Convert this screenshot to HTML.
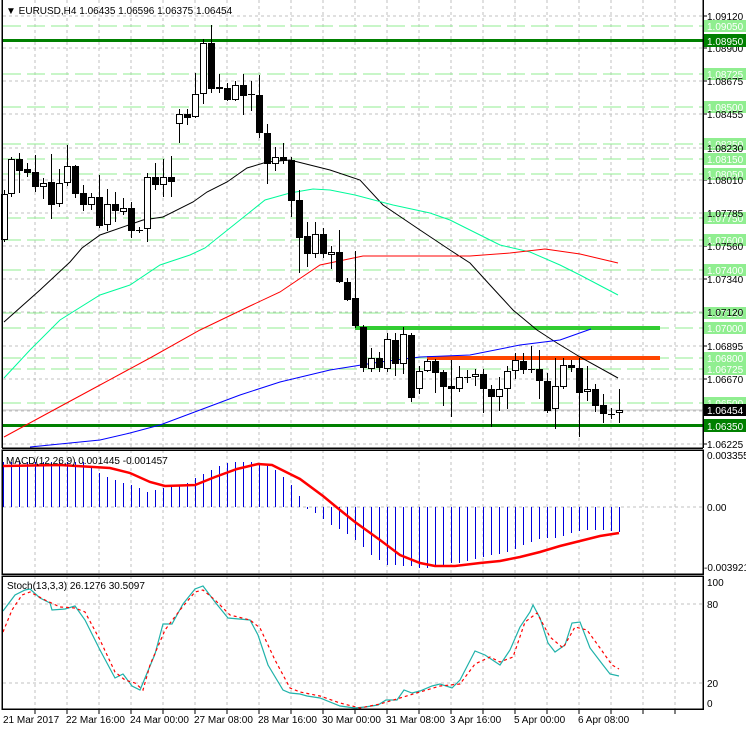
<!DOCTYPE html>
<html><head><meta charset="utf-8"><style>
html,body{margin:0;padding:0;background:#fff;width:746px;height:731px;overflow:hidden}
svg{display:block}
text{font-family:"Liberation Sans",sans-serif;font-size:10px;fill:#000}
.lbl{fill:#fff}
</style></head><body>
<svg id="s" width="746" height="731" xmlns="http://www.w3.org/2000/svg" shape-rendering="crispEdges">
<rect width="746" height="731" fill="#fff"/>
<g id="grid" stroke="#c0c0c0" stroke-dasharray="3 3" stroke-width="1"></g>
<g id="lev"></g>
<g id="ma" shape-rendering="auto" fill="none"></g>
<g id="cand"></g>
<g id="macd"></g>
<g id="stoch" shape-rendering="auto" fill="none"></g>
<g stroke="#000" stroke-width="1.5" fill="none">
<line x1="2" y1="0" x2="2" y2="448"/>
<line x1="2" y1="448" x2="703" y2="448"/>
<rect x="2" y="450" width="701" height="124"/>
<rect x="2" y="576" width="701" height="133"/>
<line x1="703" y1="0" x2="703" y2="448"/>
</g>
<g id="ticks" stroke="#000" stroke-width="1"></g>
<g id="rl"></g>
<text x="6" y="14">▼ EURUSD,H4  1.06435 1.06596 1.06375 1.06454</text>
<text x="6" y="464">MACD(12,26,9) 0.001445 -0.001457</text>
<text x="7" y="589">Stoch(13,3,3) 26.1276 30.5097</text>
<text x="707" y="459">0.003355</text>
<text x="707" y="511">0.00</text>
<text x="704" y="571">-0.003921</text>
<text x="707" y="586">100</text>
<text x="707" y="608">80</text>
<text x="707" y="687">20</text>
<text x="707" y="707">0</text>
<text x="3" y="723">21 Mar 2017</text>
<text x="66" y="723">22 Mar 16:00</text>
<text x="130" y="723">24 Mar 00:00</text>
<text x="194" y="723">27 Mar 08:00</text>
<text x="258" y="723">28 Mar 16:00</text>
<text x="322" y="723">30 Mar 00:00</text>
<text x="386" y="723">31 Mar 08:00</text>
<text x="450" y="723">3 Apr 16:00</text>
<text x="514" y="723">5 Apr 00:00</text>
<text x="578" y="723">6 Apr 08:00</text>
<g id="axt">
<text x="707" y="20">1.09120</text>
<text x="707" y="52">1.08900</text>
<text x="707" y="85">1.08675</text>
<text x="707" y="118">1.08455</text>
<text x="707" y="152">1.08230</text>
<text x="707" y="184">1.08010</text>
<text x="707" y="217">1.07785</text>
<text x="707" y="250">1.07560</text>
<text x="707" y="283">1.07340</text>
<text x="707" y="316">1.07120</text>
<text x="707" y="350">1.06895</text>
<text x="707" y="383">1.06670</text>
<text x="707" y="448">1.06225</text>
</g>
<g id="rl2"></g>
</svg>
<script>
var NS="http://www.w3.org/2000/svg";
function el(p,t,a,txt){var e=document.createElementNS(NS,t);for(var k in a)e.setAttribute(k,a[k]);if(txt!=null)e.textContent=txt;document.getElementById(p).appendChild(e);return e;}
[16,48,81,114,148,180,213,246,279,312,346,379,411,444].forEach(function(y){el("grid","line",{x1:3,y1:y,x2:703,y2:y});});
[507].forEach(function(y){el("grid","line",{x1:3,y1:y,x2:703,y2:y});});
[604,683].forEach(function(y){el("grid","line",{x1:3,y1:y,x2:703,y2:y});});
for(var x=35;x<703;x+=32){el("grid","line",{x1:x,y1:0,x2:x,y2:448});el("grid","line",{x1:x,y1:450,x2:x,y2:574});el("grid","line",{x1:x,y1:576,x2:x,y2:709});
el("ticks","line",{x1:x,y1:709,x2:x,y2:714});}
[16,48,81,114,148,180,213,246,279,312,346,379,411,444].forEach(function(y){el("ticks","line",{x1:703,y1:y,x2:707,y2:y});});
var lg=[[26,"1.09050"],[74,"1.08725"],[107,"1.08500"],[144,"1.08250"],[159,"1.08150"],[174,"1.08050"],[218,"1.07750"],[240,"1.07600"],[270,"1.07400"],[313,"1.07100"],[328,"1.07000"],[358,"1.06800"],[369,"1.06725"],[403,"1.06500"]];
lg.forEach(function(a){el("lev","line",{x1:3,y1:a[0],x2:703,y2:a[0],stroke:"#90ee90","stroke-width":1,"stroke-dasharray":"18 6"});
el("rl","rect",{x:704,y:a[0]-6,width:42,height:12,fill:"#90ee90"});el("rl","text",{x:707,y:a[0]+4,class:"lbl"},a[1]);});
el("lev","line",{x1:3,y1:410,x2:703,y2:410,stroke:"#c0c0c0","stroke-width":1});
el("lev","rect",{x:3,y:39,width:700,height:3,fill:"#008000"});
el("lev","rect",{x:3,y:424,width:700,height:3,fill:"#008000"});
el("lev","rect",{x:355,y:326,width:305,height:4,fill:"#32cd32"});
el("lev","rect",{x:427,y:356,width:233,height:4,fill:"#ff4500"});
el("rl2","rect",{x:704,y:34,width:42,height:13,fill:"#008000"});el("rl2","text",{x:707,y:45,class:"lbl"},"1.08950");
el("rl2","rect",{x:704,y:419,width:42,height:13,fill:"#008000"});el("rl2","text",{x:707,y:430,class:"lbl"},"1.06350");
el("rl2","rect",{x:704,y:404,width:42,height:12,fill:"#000"});el("rl2","text",{x:707,y:414,class:"lbl"},"1.06454");
function pl(g,pts,c,w,d){var a={points:pts.map(function(p){return p.join(",")}).join(" "),stroke:c,"stroke-width":w,fill:"none"};if(d)a["stroke-dasharray"]=d;return el(g,"polyline",a);}
pl("ma",[[4,322],[40,290],[70,262],[82,248],[100,235],[143,220],[163,217],[193,202],[207,192],[227,182],[247,168],[267,162],[290,160],[330,170],[360,180],[383,205],[420,230],[450,250],[470,263],[490,285],[513,310],[537,330],[557,343],[580,357],[618,378]],"#000",1);
pl("ma",[[4,378],[30,350],[60,320],[100,295],[130,285],[160,265],[190,255],[205,248],[240,220],[265,200],[290,193],[313,189],[330,190],[355,195],[393,205],[430,213],[450,220],[480,235],[500,245],[530,252],[560,265],[580,275],[618,295]],"#00fa9a",1);
pl("ma",[[4,437],[50,412],[100,385],[150,358],[200,330],[250,306],[280,292],[320,265],[363,256],[415,256],[470,256],[510,253],[545,249],[580,254],[618,263]],"#ff0000",1);
pl("ma",[[30,447],[60,444],[100,440],[130,433],[160,425],[200,410],[240,395],[280,382],[330,370],[380,362],[420,357],[470,355],[520,345],[560,340],[591,329]],"#0000ff",1);
var C=[[4,190,194,240,242,"W"],[11,157,159,194,197,"W"],[19,153,159,171,193,"B"],[27,163,169,173,177,"B"],[35,155,172,187,192,"B"],[43,178,183,187,199,"W"],[51,154,182,205,219,"B"],[59,169,183,204,207,"W"],[67,145,166,183,186,"W"],[75,165,166,194,198,"B"],[83,185,193,205,211,"B"],[91,193,197,205,210,"W"],[99,175,197,226,228,"B"],[107,189,204,225,231,"W"],[115,192,204,211,222,"B"],[123,198,208,212,215,"W"],[131,202,208,231,238,"B"],[139,227,230,230,233,"C"],[147,173,177,229,242,"W"],[155,163,177,185,190,"B"],[163,159,177,185,197,"W"],[171,156,177,182,197,"B"],[179,109,114,124,143,"W"],[187,109,114,118,125,"B"],[195,73,94,117,118,"W"],[203,39,43,94,104,"W"],[211,25,43,89,93,"B"],[219,74,87,89,93,"B"],[227,83,88,100,101,"B"],[235,81,85,100,101,"W"],[243,74,85,96,115,"B"],[251,81,94,94,111,"C"],[259,75,95,133,138,"B"],[267,124,133,164,184,"B"],[275,147,157,164,171,"W"],[283,143,157,161,164,"B"],[291,157,160,201,217,"B"],[299,190,200,238,273,"B"],[307,222,236,254,267,"B"],[315,222,234,254,258,"W"],[323,228,234,254,258,"B"],[331,246,252,255,269,"W"],[339,230,252,282,283,"B"],[347,278,282,300,301,"B"],[355,251,298,326,328,"B"],[363,325,327,368,372,"B"],[371,348,358,369,372,"W"],[379,352,358,368,372,"B"],[387,333,339,369,372,"W"],[395,333,340,364,376,"B"],[403,327,334,364,374,"W"],[411,333,335,398,402,"B"],[419,366,371,389,394,"W"],[427,359,361,371,372,"W"],[435,359,361,373,393,"B"],[443,370,372,387,406,"B"],[451,360,386,389,417,"B"],[459,366,377,389,392,"W"],[467,370,377,377,383,"C"],[475,369,374,377,386,"W"],[483,369,374,389,413,"B"],[491,385,389,397,427,"B"],[499,377,389,397,411,"W"],[507,366,371,389,409,"W"],[515,353,360,371,379,"W"],[523,353,361,370,374,"B"],[531,346,369,369,373,"C"],[539,350,369,381,399,"B"],[547,373,381,411,413,"B"],[555,358,386,409,429,"W"],[563,358,365,387,389,"W"],[571,360,365,368,372,"B"],[579,358,368,393,437,"B"],[587,366,389,392,401,"W"],[595,384,389,406,412,"B"],[603,394,405,414,423,"B"],[611,408,414,414,419,"C"],[619,389,410,413,423,"W"]];
C.forEach(function(c){var x=c[0];el("cand","rect",{x:x,y:c[1],width:1,height:c[4]-c[1],fill:"#000"});
if(c[5]=="C"){el("cand","rect",{x:x-3,y:c[2],width:7,height:1,fill:"#000"});}
else{var h=Math.max(c[3]-c[2],2);el("cand","rect",{x:x-3,y:c[2],width:7,height:h,fill:"#000"});
if(c[5]=="W"&&h>2)el("cand","rect",{x:x-2,y:c[2]+1,width:5,height:h-2,fill:"#fff"});}});
var H=[462,462,462,462,462,462,462,462,462,462,462,466,473,477,480,483,485,488,492,490,488,487,486,483,478,474,470,466,463,462,462,462,464,466,470,477,485,496,509,513,519,525,529,534,540,547,555,560,565,565,566,566,568,568,565,565,563,563,561,559,557,555,554,552,549,545,542,539,538,538,536,533,531,530,530,530,531,532,533];
H.forEach(function(y,i){var x=3+8*i;if(x>620)return;el("macd","rect",{x:x,y:Math.min(y,507),width:1,height:Math.abs(507-y),fill:"#0000dd"});});
var s=pl("macd",[[3,466],[60,465],[110,468],[130,473],[150,482],[165,486],[195,485],[215,477],[237,469],[258,464],[272,465],[286,472],[300,479],[323,496],[340,510],[355,522],[380,540],[400,555],[420,563],[435,566],[455,566],[480,563],[500,561],[520,557],[540,552],[560,546],[580,541],[600,536],[619,533]],"#ff0000",2.5);
s.setAttribute("shape-rendering","auto");
pl("stoch",[[3,611],[15,595],[25,590],[30,589],[40,598],[50,603],[52,610],[65,609],[75,606],[85,620],[100,650],[115,678],[123,674],[132,686],[140,690],[155,654],[163,624],[172,624],[183,604],[195,589],[203,586],[215,602],[228,618],[250,620],[258,635],[268,665],[283,690],[290,693],[300,694],[307,696],[320,698],[340,706],[355,708],[365,707],[378,705],[386,700],[397,700],[404,690],[412,693],[420,691],[432,686],[440,684],[452,688],[460,680],[475,651],[485,655],[500,665],[510,650],[520,627],[530,612],[533,605],[540,618],[548,643],[555,652],[565,645],[572,623],[580,622],[590,648],[603,665],[610,674],[619,676]],"#20b2aa",1.2);
pl("stoch",[[3,632],[12,610],[22,595],[30,592],[45,600],[60,607],[75,608],[85,612],[100,640],[115,672],[125,680],[135,683],[143,690],[150,665],[165,630],[180,610],[195,592],[203,590],[215,600],[230,615],[250,620],[260,628],[275,660],[290,688],[300,692],[320,696],[340,703],[360,708],[380,704],[400,698],[420,692],[440,686],[460,684],[475,664],[490,657],[500,662],[513,657],[525,622],[537,613],[550,637],[563,648],[575,627],[587,630],[600,648],[612,665],[619,669]],"#ff0000",1.2,"3 3");
</script>
</body></html>
